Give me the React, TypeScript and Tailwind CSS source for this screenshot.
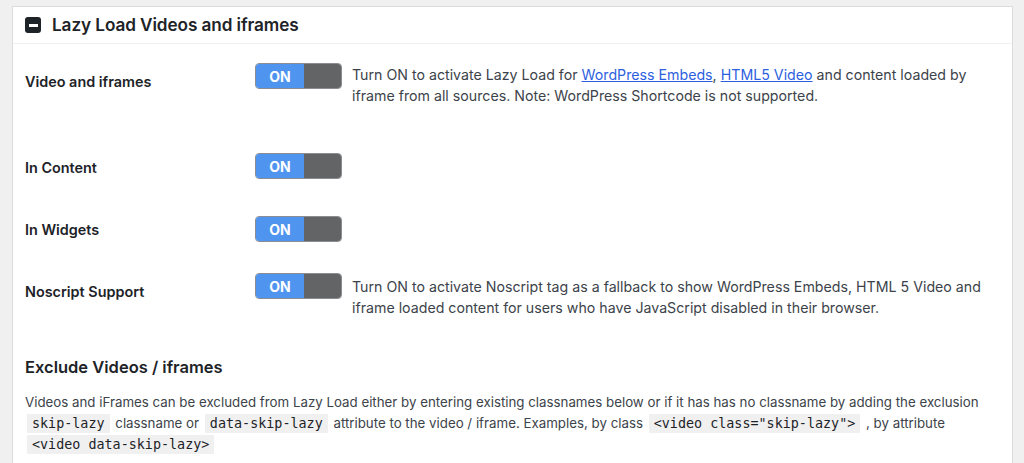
import React from "react";

function Toggle() {
  return (
    <div className="flex h-[26px] w-[87px] shrink-0 overflow-hidden rounded-[4px] border border-[#8a8d91]">
      <div className="flex w-[48px] items-center justify-center bg-[#4f94ef] text-[14px] font-bold text-white">
        ON
      </div>
      <div className="flex-1 bg-[#636466]" />
    </div>
  );
}

function Code({ children }: { children: React.ReactNode }) {
  return (
    <code className="mx-[2px] whitespace-nowrap bg-[#f0f0f1] px-[5px] py-[2px] font-['DejaVu_Sans_Mono',monospace] text-[13.4px] text-[#1d2327]">
      {children}
    </code>
  );
}

export default function App() {
  return (
    <div className="min-h-[463px] w-full overflow-hidden bg-[#f0f0f1] pl-[12px] pr-[11px] pt-[6px] font-['Inter',sans-serif] text-[#1d2327]">
      <div className="min-h-[470px] border border-[#dcdcde] bg-white">
        {/* header */}
        <div className="flex h-[37px] items-center gap-[11px] border-b border-[#f0f0f1] pl-[12px]">
          <div className="flex h-[16px] w-[16px] items-center justify-center rounded-[3px] bg-[#1d2327]">
            <div className="h-[3px] w-[9px] bg-white" />
          </div>
          <h2 className="text-[17.2px] font-semibold tracking-[-0.1px]">Lazy Load Videos and iframes</h2>
        </div>

        <div className="px-[12px]">
          {/* row 1 */}
          <div className="mt-[19px] flex items-start">
            <div className="w-[230px] shrink-0 pt-[9px] text-[14.4px] font-semibold leading-[20px]">Video and iframes</div>
            <Toggle />
            <p className="ml-[10px] mt-[1px] max-w-[650px] text-[14.2px] leading-[21px] text-[#3c434a]">
              Turn ON to activate Lazy Load for{" "}
              <a className="text-[#2c5fe0] underline">WordPress Embeds</a>,{" "}
              <a className="text-[#2c5fe0] underline">HTML5 Video</a> and content loaded by iframe from all
              sources. Note: WordPress Shortcode is not supported.
            </p>
          </div>

          {/* row 2 */}
          <div className="mt-[47px] flex items-start">
            <div className="w-[230px] shrink-0 pt-[5px] text-[14.4px] font-semibold leading-[20px]">In Content</div>
            <Toggle />
          </div>

          {/* row 3 */}
          <div className="mt-[37px] flex items-start">
            <div className="w-[230px] shrink-0 pt-[4px] text-[14.4px] font-semibold leading-[20px]">In Widgets</div>
            <Toggle />
          </div>

          {/* row 4 */}
          <div className="mt-[31px] flex items-start">
            <div className="w-[230px] shrink-0 pt-[9px] text-[14.4px] font-semibold leading-[20px]">Noscript Support</div>
            <Toggle />
            <p className="ml-[10px] mt-[3px] max-w-[650px] text-[14.2px] leading-[21px] text-[#3c434a]">
              Turn ON to activate Noscript tag as a fallback to show WordPress Embeds, HTML 5 Video and iframe
              loaded content for users who have JavaScript disabled in their browser.
            </p>
          </div>

          <h3 className="mt-[37px] text-[16.5px] font-semibold">Exclude Videos / iframes</h3>

          <p className="mt-[12px] text-[13.3px] leading-[21px] text-[#3c434a]">
            Videos and iFrames can be excluded from Lazy Load either by entering existing classnames below or if it
            has has no classname by adding the exclusion <Code>skip-lazy</Code> classname or{" "}
            <Code>data-skip-lazy</Code> attribute to the video / iframe. Examples, by class{" "}
            <Code>&lt;video class="skip-lazy"&gt;</Code> , by attribute <Code>&lt;video data-skip-lazy&gt;</Code>
          </p>
        </div>
      </div>
    </div>
  );
}
